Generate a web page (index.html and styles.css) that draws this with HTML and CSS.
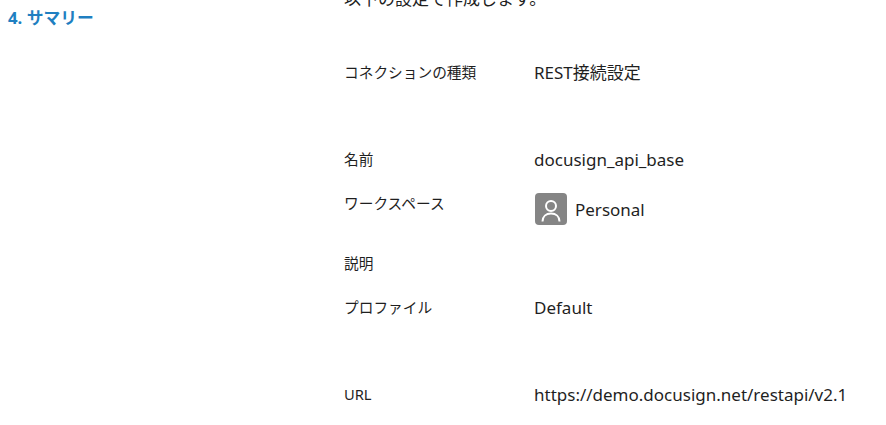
FILE: index.html
```html
<!DOCTYPE html>
<html lang="ja">
<head>
    <meta charset="UTF-8">
    <meta name="viewport" content="width=device-width, initial-scale=1.0">
    <title>サマリー</title>
    <link rel="stylesheet" href="styles.css">
</head>
<body>
    <div class="page">
        <div class="side">
            <h2 class="step-title">4. サマリー</h2>
        </div>
        <div class="summary">
            <p class="intro">以下の設定で作成します。</p>
            <div class="row row-type">
                <span class="label">コネクションの種類</span>
                <span class="value">REST接続設定</span>
            </div>
            <div class="row row-name">
                <span class="label">名前</span>
                <span class="value">docusign_api_base</span>
            </div>
            <div class="row row-workspace">
                <span class="label">ワークスペース</span>
                <span class="value workspace">
                    <span class="avatar">
                        <svg width="32" height="32" viewBox="0 0 32 32" fill="none" stroke="#fff" stroke-width="2">
                            <circle cx="16" cy="13" r="5"/>
                            <path d="M7.500 28.500c0-5 3.500-8 8.500-8s8.500 3 8.500 8"/>
                        </svg>
                    </span>
                    <span class="workspace-name">Personal</span>
                </span>
            </div>
            <div class="row row-desc">
                <span class="label">説明</span>
            </div>
            <div class="row row-profile">
                <span class="label">プロファイル</span>
                <span class="value">Default</span>
            </div>
            <div class="row row-url">
                <span class="label">URL</span>
                <span class="value">https://demo.docusign.net/restapi/v2.1</span>
            </div>
        </div>
    </div>
</body>
</html>
```

FILE: styles.css
```css
html, body {
    height: 100%;
    margin: 0;
    overflow: hidden;
}
body {
    font-family: "Noto Sans", "Noto Sans CJK JP", sans-serif;
    background: #fff;
    color: #1f1f1f;
}
.page {
    display: flex;
    height: 100%;
}
.side {
    width: 344px;
    padding: 7px 0 0 8px;
    box-sizing: border-box;
}
.step-title {
    margin: 0;
    font-size: 16.800px;
    line-height: 22px;
    font-weight: 700;
    color: #1f7fc1;
}
.summary {
    flex: 1;
    margin-top: -13px;
}
.intro {
    margin: 0;
    font-size: 17px;
    line-height: 24px;
}
.row {
    display: flex;
    align-items: center;
}
.label {
    width: 190px;
    padding-bottom: 2px;
    font-size: 14.700px;
    line-height: 20px;
}
.value {
    font-size: 17px;
    line-height: 24px;
}
.row-type {
    margin-top: 50px;
}
.row-name {
    margin-top: 63px;
}
.row-workspace {
    margin-top: 21px;
    align-items: flex-start;
}
.workspace {
    display: flex;
    align-items: center;
    gap: 8px;
    padding-left: 1px;
}
.workspace-name {
    padding-top: 2px;
}
.avatar {
    display: flex;
    width: 32px;
    height: 32px;
    background: #858585;
    border-radius: 4px;
}
.row-desc {
    margin-top: 28px;
}
.row-profile {
    margin-top: 21px;
}
.row-url {
    margin-top: 63px;
}
```
